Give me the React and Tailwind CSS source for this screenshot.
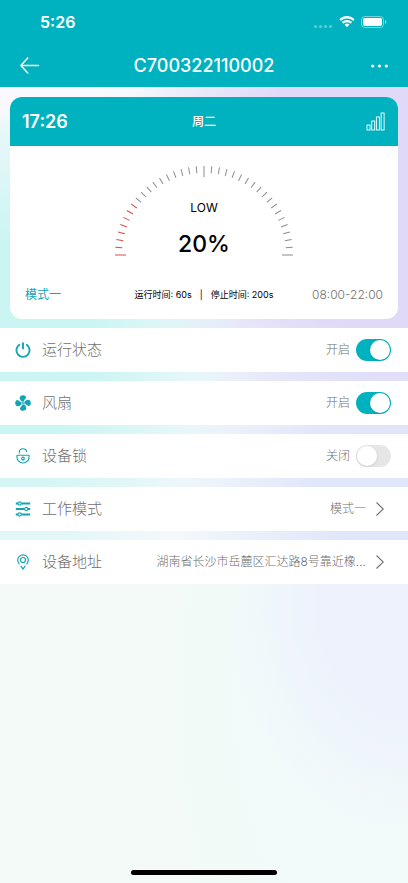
import { useState } from 'react'

const TICKS = Array.from({ length: 37 }, (_, i) => i)

function BackIcon() {
  return (
    <svg className="w-5 h-5" viewBox="0 0 20 20" fill="none" stroke="currentColor" strokeWidth="1.4" strokeLinecap="round" strokeLinejoin="round">
      <path d="M18.5 9.500H.8M7.800 2 .8 9.500l7 7.500" />
    </svg>
  )
}

function StatusIcons() {
  return (
    <div className="flex items-center gap-1.5">
      <svg className="w-5 h-4" viewBox="0 0 20 16" fill="#fff" fillOpacity="0.35">
        <circle cx="2.5" cy="12.5" r="1.6" /><circle cx="7.5" cy="12.5" r="1.6" /><circle cx="12.5" cy="12.5" r="1.6" /><circle cx="17.5" cy="12.5" r="1.6" />
      </svg>
      <svg className="w-4 h-3" viewBox="0 0 16 12" fill="#fff">
        <path d="M8 2.4c2.3 0 4.4.9 5.9 2.3.1.1.3.1.4 0l1.1-1.2c.1-.1.1-.3 0-.4A10.800 10.800 0 0 0 8 .1C5.200.1 2.600 1.200.6 3.100c-.1.1-.1.3 0 .4l1.1 1.2c.1.1.3.1.4 0A8.500 8.500 0 0 1 8 2.400z" />
        <path d="M8 6.200c1.200 0 2.400.5 3.300 1.200.1.1.3.1.4 0l1.200-1.200c.1-.1.1-.3 0-.4a7.200 7.200 0 0 0-9.800 0c-.1.1-.1.3 0 .4l1.200 1.200c.1.1.3.1.4 0A5.200 5.200 0 0 1 8 6.200z" />
        <path d="M10.300 8.800c.1-.1.1-.3 0-.4a3.500 3.500 0 0 0-4.600 0c-.1.1-.1.3 0 .4l2.100 2.300c.1.1.3.1.4 0z" />
      </svg>
      <svg className="w-[26px] h-3" viewBox="0 0 26 12" fill="none">
        <rect x="0.5" y="0.5" width="22" height="11" rx="3.2" stroke="#fff" strokeOpacity="0.45" />
        <rect x="2" y="2" width="19" height="8" rx="1.8" fill="#fff" />
        <path d="M24 4v4c.8-.3 1.4-1.100 1.4-2S24.800 4.300 24 4z" fill="#fff" fillOpacity="0.5" />
      </svg>
    </div>
  )
}

function SignalIcon() {
  return (
    <svg className="w-5 h-5" viewBox="0 0 20 20" fill="none" stroke="currentColor" strokeWidth="0.9">
      <rect x="1" y="13" width="3" height="5" />
      <rect x="5.700" y="9" width="3" height="9" />
      <rect x="10.400" y="5" width="3" height="13" />
      <rect x="15.100" y="1" width="3" height="17" />
    </svg>
  )
}

function PowerIcon() {
  return (
    <svg className="w-4 h-4" viewBox="0 0 16 16" fill="none" stroke="currentColor" strokeWidth="1.9" strokeLinecap="round">
      <path d="M4.300 2.800a6.600 6.600 0 1 0 7.400 0M8 1.100v5.400" />
    </svg>
  )
}

function FanIcon() {
  return (
    <svg className="w-4 h-4" viewBox="0 0 16 16" fill="currentColor">
      {[0, 90, 180, 270].map(deg => (
        <path key={deg} transform={`rotate(${deg} 8 8)`} d="M7.500 7.200C6.300 6.100 4.700 4.900 4.700 3 4.700 1.200 6.200.2 7.900.2c1.800 0 3.200.9 3.100 2.300C10.900 4 8.800 4.800 8.500 7.200z" />
      ))}
      <circle cx="8" cy="8" r="1.500" fill="#fff" />
      <circle cx="8" cy="8" r="0.900" />
    </svg>
  )
}

function LockIcon() {
  return (
    <svg className="w-4 h-4" viewBox="0 0 16 16" fill="none" stroke="currentColor" strokeWidth="1.100" strokeLinecap="round">
      <path d="M2.500 7.200h11c.4 0 .6.2.6.6v1.100a6.100 6.100 0 0 1-12.200 0V7.800c0-.4.2-.6.6-.6z" />
      <path d="M4.300 5V4.200C4.300 2.100 5.900.8 8 .8c2 0 3.500 1.200 3.700 3" />
      <circle cx="8" cy="10.400" r="1.300" /><path d="M8 11.700v.6" />
    </svg>
  )
}

function SlidersIcon() {
  return (
    <svg className="w-4 h-4" viewBox="0 0 16 16" fill="none" stroke="currentColor">
      <path d="M.8 2.500h2.200M6.200 2.500h9M.8 8h8.800M12.800 8h2.400M.8 13.500h2.200M6.200 13.500h9" strokeWidth="1.800" />
      <g strokeWidth="1.100"><circle cx="4.600" cy="2.500" r="1.600" /><circle cx="11.200" cy="8" r="1.600" /><circle cx="4.600" cy="13.500" r="1.600" /></g>
    </svg>
  )
}

function PinIcon() {
  return (
    <svg className="w-4 h-4" viewBox="0 0 16 16" fill="none" stroke="currentColor" strokeWidth="1.200" strokeLinecap="round" strokeLinejoin="round">
      <path d="M4.200 9.800a5.300 5.300 0 1 1 7.600 0" />
      <circle cx="8" cy="6" r="2.500" />
      <path d="M6 12.200 8 15.100l2-2.900" />
    </svg>
  )
}

function Chevron() {
  return (
    <svg className="w-2 h-3.5 shrink-0" viewBox="0 0 8 14" fill="none" stroke="currentColor" strokeWidth="1.100">
      <path d="M.5.500 7.300 7 .5 13.500" />
    </svg>
  )
}

function Gauge({ value }) {
  return (
    <div className="relative mx-auto mt-5 w-[178px]">
      <svg className="block w-full h-[90px]" viewBox="0 0 178 90">
        {TICKS.map(i => {
          const long = i % 18 === 0
          return (
            <line key={i} x1="0" x2={long ? 11 : 7} y1="89" y2="89" strokeWidth="1"
              stroke={i * 100 < value * 36 ? '#dc4a4a' : '#8c8c8c'} transform={`rotate(${i * 5} 89 89)`} />
          )
        })}
      </svg>
      <div className="absolute inset-x-0 bottom-0 flex flex-col items-center text-black">
        <span className="text-xs leading-4">LOW</span>
        <span className="mt-4 text-[23px] leading-6 font-medium">{value}%</span>
      </div>
    </div>
  )
}

function ToggleRow({ icon, label, defaultOn }) {
  const [on, setOn] = useState(defaultOn)
  return (
    <label className="flex items-center h-11 pl-[15px] pr-[17px] bg-white">
      <span className="text-[#12a5b4]">{icon}</span>
      <span className="ml-[11px] flex-1 text-[15px] leading-5 font-light">{label}</span>
      <span className="text-xs font-light">{on ? '开启' : '关闭'}</span>
      <input type="checkbox" role="switch" checked={on} onChange={e => setOn(e.target.checked)}
        className="ml-1.5 appearance-none w-[35px] h-[22px] rounded-full bg-[#e6e6e8] checked:bg-[#00b2bf] before:block before:w-5 before:h-5 before:m-px before:rounded-full before:bg-white before:shadow-sm checked:before:ml-3.5" />
    </label>
  )
}

function LinkRow({ icon, label, value }) {
  return (
    <button type="button" className="flex items-center w-full h-11 pl-[15px] pr-6 bg-white text-left">
      <span className="text-[#12a5b4]">{icon}</span>
      <span className="ml-[11px] flex-1 text-[15px] leading-5 font-light whitespace-nowrap">{label}</span>
      <span className="min-w-0 truncate text-xs font-light">{value}</span>
      <span className="ml-2.5"><Chevron /></span>
    </button>
  )
}

export default function App() {
  return (
    <div className="min-h-screen flex flex-col bg-[#f3faf7] bg-[radial-gradient(ellipse_180px_230px_at_100%_600px,#eef2fc_50%,transparent),radial-gradient(ellipse_240px_420px_at_100%_700px,#f1fbfa_60%,transparent)] text-[#6f6f6f] font-['Inter','Noto_Sans_CJK_SC',sans-serif]">
      <header className="bg-[#00b2bf] text-white">
        <div className="flex items-center justify-between h-11 pl-10 pr-[21px]">
          <span className="text-base font-semibold">5:26</span>
          <StatusIcons />
        </div>
        <div className="grid grid-cols-[1fr_auto_1fr] items-center h-[43px] px-5">
          <button type="button" aria-label="返回" className="justify-self-start"><BackIcon /></button>
          <h1 className="text-lg font-medium">C700322110002</h1>
          <button type="button" aria-label="更多" className="justify-self-end">
            <svg className="w-[17px] h-4" viewBox="0 0 17 16" fill="currentColor">
              <circle cx="1.700" cy="8" r="1.600" /><circle cx="8.500" cy="8" r="1.600" /><circle cx="15.300" cy="8" r="1.600" />
            </svg>
          </button>
        </div>
      </header>

      <main className="flex flex-col gap-[9px] pt-2.5 bg-[#f3f8fb] bg-[radial-gradient(ellipse_170px_40px_at_0_0,#fbf9ff_45%,transparent),radial-gradient(ellipse_240px_260px_at_0_260px,#cbf5f3_40%,transparent),radial-gradient(ellipse_300px_260px_at_100%_100px,#e0d9f8_55%,transparent),radial-gradient(ellipse_240px_240px_at_100%_380px,#e1e7fa_40%,transparent)]">
        <section className="mx-2.5 rounded-xl overflow-hidden bg-white">
          <div className="grid grid-cols-3 items-center h-[49px] px-3 bg-[#00b2bf] text-white">
            <span className="text-lg font-semibold">17:26</span>
            <span className="justify-self-center text-xs font-medium">周二</span>
            <span className="justify-self-end"><SignalIcon /></span>
          </div>
          <Gauge value={20} />
          <div className="grid grid-cols-[1fr_auto_1fr] items-center mt-[30px] mb-[15px] px-[15px] text-xs leading-[18px]">
            <span className="text-[#12a5b4]">模式一</span>
            <span className="flex gap-2 text-[9px] text-black">
              <span>运行时间: 60s</span><span>|</span><span>停止时间: 200s</span>
            </span>
            <span className="justify-self-end font-light">08:00-22:00</span>
          </div>
        </section>

        <ToggleRow icon={<PowerIcon />} label="运行状态" defaultOn />
        <ToggleRow icon={<FanIcon />} label="风扇" defaultOn />
        <ToggleRow icon={<LockIcon />} label="设备锁" defaultOn={false} />
        <LinkRow icon={<SlidersIcon />} label="工作模式" value="模式一" />
        <LinkRow icon={<PinIcon />} label="设备地址" value="湖南省长沙市岳麓区汇达路8号靠近橡..." />
      </main>

      <div className="mt-auto mx-auto mb-2 w-[146px] h-[5px] rounded-full bg-black" />
    </div>
  )
}
